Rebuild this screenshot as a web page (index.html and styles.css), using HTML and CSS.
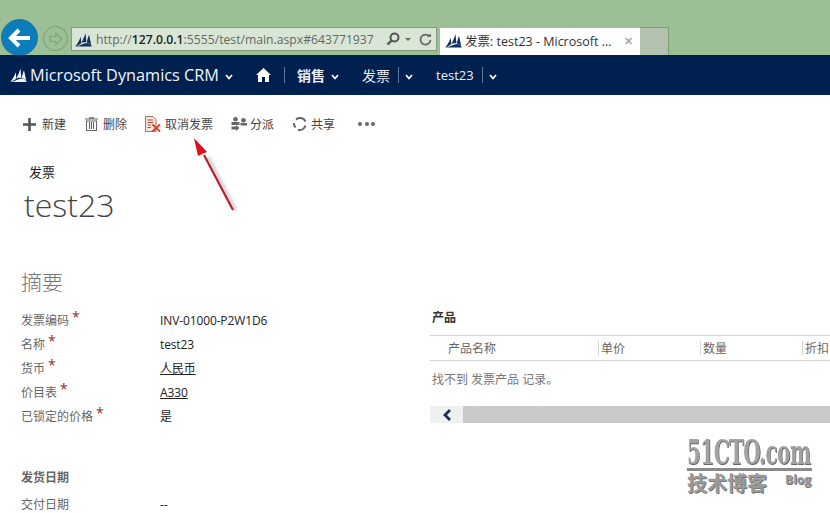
FILE: index.html
```html
<!DOCTYPE html>
<html lang="zh-CN">
<head>
  <meta charset="UTF-8">
  <meta name="viewport" content="width=device-width, initial-scale=1.0">
  <title>发票: test23 - Microsoft Dynamics CRM</title>
  <link rel="stylesheet" href="styles.css">
</head>
<body>

  <svg class="defs" width="0" height="0">
    <symbol id="sails" viewBox="0 0 24 20">
      <path d="M0 20 C3 17 6 12 8 6 L9 15 C7 17 4 19 0 20Z"/>
      <path d="M9 15 C11 11 13 6 15 1 L16 14 C14 14 11 14 9 15Z"/>
      <path d="M16.500 14 L19 5 L20 4 L23 18 C21 16 19 15 16.500 14Z"/>
      <path d="M1 20 C7 19 12 15 17 15 C20 15 22 17 24 20Z"/>
    </symbol>
    <symbol id="chev" viewBox="0 0 8 6">
      <path d="M1 1 L4 4.500 L7 1" fill="none" stroke="currentColor" stroke-width="1.700"/>
    </symbol>
  </svg>

  <!-- 浏览器 -->
  <div class="chrome">
    <div class="btn-back">
      <svg width="24" height="20" viewBox="0 0 24 20"><path d="M11 2 L3 10 L11 18 M3 10 H22" fill="none" stroke="#fff" stroke-width="4"/></svg>
    </div>
    <div class="btn-forward">
      <svg width="16" height="14" viewBox="0 0 16 14"><path d="M8 1.500 L14 7 L8 12.500 V9.500 H2 V4.500 H8Z" fill="none" stroke="#7da57a" stroke-width="1.200"/></svg>
    </div>
    <div class="address">
      <svg class="fav"><use href="#sails"/></svg>
      <span class="url">http://<b>127.0.0.1</b>:5555/test/main.aspx#643771937</span>
      <svg class="addr-icon addr-search" width="14" height="14" viewBox="0 0 14 14"><circle cx="8.500" cy="5.500" r="4" fill="none" stroke="#555" stroke-width="2"/><path d="M5.500 8.500 L1.500 12.500" stroke="#555" stroke-width="2.400"/></svg>
      <span class="caret"></span>
      <svg class="addr-icon" width="13" height="13" viewBox="0 0 13 13"><path d="M10.500 3.500 A5 5 0 1 0 11.500 7" fill="none" stroke="#666" stroke-width="1.700"/><path d="M8 3.800 H12 V0.500Z" fill="#666"/></svg>
    </div>
    <div class="tab">
      <svg class="fav"><use href="#sails"/></svg>
      <span class="tab-title">发票: test23 - Microsoft ...</span>
      <span class="tab-close">✕</span>
    </div>
    <div class="tab-new"></div>
  </div>

  <!-- 导航 -->
  <nav class="nav">
    <svg class="nav-logo"><use href="#sails"/></svg>
    <span class="brand">Microsoft Dynamics CRM</span>
    <svg class="chev chev-brand"><use href="#chev"/></svg>
    <svg class="home" width="15" height="14" viewBox="0 0 15 14"><path d="M7.500 0 L15 7 H13 V14 H9 V9 H6 V14 H2 V7 H0Z" fill="#fff"/></svg>
    <span class="nav-sep sep-home"></span>
    <b class="nav-item">销售</b>
    <svg class="chev chev-sales"><use href="#chev"/></svg>
    <span class="nav-item item-invoice">发票</span>
    <span class="nav-sep sep-invoice"></span>
    <svg class="chev chev-invoice"><use href="#chev"/></svg>
    <span class="nav-item item-record">test23</span>
    <span class="nav-sep sep-record"></span>
    <svg class="chev chev-record"><use href="#chev"/></svg>
  </nav>

  <!-- 工具栏 -->
  <div class="toolbar">
    <div class="tool tool-new">
      <svg width="13" height="13" viewBox="0 0 13 13"><path d="M6.500 0 V13 M0 6.500 H13" stroke="#555" stroke-width="2.600"/></svg>
      <span>新建</span>
    </div>
    <div class="tool tool-del">
      <svg width="13" height="14" viewBox="0 0 13 14"><path d="M0 2 H13 M1.500 4 H11.500 V13.500 H1.500Z M4.500 5 V12 M6.500 5 V12 M8.500 5 V12 M4.500 2 V0.700 H8.500 V2" fill="none" stroke="#666" stroke-width="1.100"/></svg>
      <span>删除</span>
    </div>
    <div class="tool tool-cancel">
      <svg width="16" height="16" viewBox="0 0 16 16">
        <path d="M0.500 0.500 H8 L11 3.500 V15.500 H0.500Z" fill="#f6e4df" stroke="#b5705f"/>
        <path d="M2.500 4 H8 M2.500 6.500 H8 M2.500 9 H6 M2.500 11.500 H6" stroke="#a8574a"/>
        <path d="M7.500 8.500 L15 15.500 M15 8.500 L7.500 15.500" stroke="#d9472b" stroke-width="2"/>
      </svg>
      <span>取消发票</span>
    </div>
    <div class="tool tool-assign">
      <svg width="16" height="15" viewBox="0 0 16 15" fill="#666">
        <circle cx="4.500" cy="2.300" r="2.300"/><path d="M0.500 5 H8.500 V8 H0.500Z"/>
        <path d="M0.500 9.500 H5 V8 L8.500 11 L5 14 V12.500 H0.500Z"/>
        <circle cx="12.500" cy="3.300" r="2.300"/><path d="M9.500 6 H16 V8.500 H9.500Z"/>
      </svg>
      <span>分派</span>
    </div>
    <div class="tool tool-share">
      <svg width="14" height="14" viewBox="0 0 14 14"><path d="M3 2.500 A6 6 0 0 1 12.500 4.500 M12.500 8.500 A6 6 0 0 1 5 12.800 M2.500 10.500 A6 6 0 0 1 1 6" fill="none" stroke="#666" stroke-width="2"/></svg>
      <span>共享</span>
    </div>
    <div class="tool-more"><i></i><i></i><i></i></div>
  </div>

  <!-- 标题 -->
  <div class="entity">发票</div>
  <h1 class="record-name">test23</h1>

  <main class="form">
    <section class="col-left">
      <h2 class="section-title">摘要</h2>
      <div class="field"><label>发票编码<em>*</em></label><span>INV-01000-P2W1D6</span></div>
      <div class="field"><label>名称<em>*</em></label><span>test23</span></div>
      <div class="field"><label>货币<em>*</em></label><a href="#">人民币</a></div>
      <div class="field"><label>价目表<em>*</em></label><a href="#">A330</a></div>
      <div class="field"><label>已锁定的价格<em>*</em></label><span>是</span></div>
      <h3 class="group-title">发货日期</h3>
      <div class="field"><label>交付日期</label><span>--</span></div>
    </section>

    <section class="col-right">
      <h3 class="grid-title">产品</h3>
      <div class="grid-head">
        <div class="cell cell-name">产品名称</div>
        <div class="cell">单价</div>
        <div class="cell">数量</div>
        <div class="cell">折扣</div>
      </div>
      <p class="grid-empty">找不到 发票产品 记录。</p>
      <div class="hscroll">
        <div class="hscroll-btn">
          <svg width="10" height="12" viewBox="0 0 10 12"><path d="M8 1 L3 6 L8 11" fill="none" stroke="#1f2d52" stroke-width="2.800"/></svg>
        </div>
      </div>
    </section>
  </main>

  <!-- 标注 -->
  <svg class="arrow" width="50" height="82" viewBox="0 0 50 82">
    <path class="arrow-shadow" d="M45 76 L17 22" stroke="#999" stroke-width="3"/>
    <path d="M42 75 L13 20" stroke="#b9202a" stroke-width="2.200"/>
    <path d="M3 3 L7 21 L12 18.500 L16 17Z" fill="#e00d1a"/>
  </svg>

  <div class="watermark">
    <div class="wm-site"><span>51CTO.com</span></div>
    <div class="wm-sub"><span>技术博客</span><small>Blog</small></div>
  </div>

</body>
</html>
```

FILE: styles.css
```css
* {
  margin: 0;
  padding: 0;
  box-sizing: border-box;
}

html, body {
  height: 100%;
  overflow: hidden;
}

body {
  position: relative;
  background: #fff;
  color: #222;
  font-family: "Open Sans", "Noto Sans CJK SC", sans-serif;
  font-size: 12px;
}

.defs {
  position: absolute;
}

/* 浏览器 */
.chrome {
  display: flex;
  align-items: flex-end;
  height: 55px;
  padding-left: 1px;
  background: #9cbf95;
  overflow: hidden;
}

.btn-back {
  display: flex;
  align-items: center;
  justify-content: center;
  flex: none;
  width: 37px;
  height: 37px;
  margin-bottom: -1px;
  border-radius: 50%;
  background: #0a7dbd;
  border: 1px solid #2f6f9c;
}

.btn-forward {
  display: flex;
  align-items: center;
  justify-content: center;
  flex: none;
  width: 25px;
  height: 25px;
  margin: 0 3px 4px 5px;
  border: 1px solid #74a070;
  border-radius: 50%;
}

.address {
  display: flex;
  align-items: center;
  flex: none;
  width: 366px;
  height: 24px;
  margin-bottom: 4px;
  padding: 0 5px 0 3px;
  background: #d9e6d5;
  border: 1px solid #7f9a7c;
  color: #666;
  font-size: 12.200px;
}

.url {
  white-space: nowrap;
}

.url b {
  color: #222;
  font-weight: 600;
}

.fav {
  flex: none;
  width: 17px;
  height: 15px;
  fill: #14305f;
}

.address .fav {
  margin-right: 4px;
}

.addr-icon {
  flex: none;
}

.addr-search {
  margin-left: 12px;
}

.caret {
  width: 0;
  height: 0;
  margin: 0 8px 0 5px;
  border-left: 3px solid transparent;
  border-right: 3px solid transparent;
  border-top: 3px solid #666;
}

.tab {
  display: flex;
  align-items: center;
  flex: none;
  width: 200px;
  height: 27px;
  margin-left: 3px;
  padding: 0 7px 3px 5px;
  background: #fff;
  color: #333;
  font-size: 12.500px;
}

.tab-title {
  flex: 1;
  margin-left: 3px;
  white-space: nowrap;
}

.tab-close {
  color: #aaa;
  font-size: 11px;
  font-weight: bold;
}

.tab-new {
  flex: none;
  width: 29px;
  height: 28px;
  background: #b2c2ae;
  border: 1px solid #7f9a7c;
  border-left: 0;
  border-bottom: 0;
}

/* 导航 */
.nav {
  display: flex;
  align-items: center;
  height: 40px;
  padding-left: 10px;
  background: #002050;
  color: #e8eef6;
}

.nav-logo {
  flex: none;
  width: 17px;
  height: 14px;
  margin-right: 3px;
  fill: #f2f2f2;
}

.brand {
  width: 188px;
  color: #f2f5f9;
  font-size: 16.300px;
  white-space: nowrap;
}

.chev {
  flex: none;
  width: 8px;
  height: 6px;
  margin-top: 3px;
  color: #fff;
}

.chev-brand { margin-left: 7px; }
.home { flex: none; margin-left: 23px; }
.nav-sep {
  flex: none;
  width: 1px;
  height: 16px;
  background: #5f7796;
}
.sep-home { margin: 0 12px 0 13px; }
.nav-item {
  font-size: 14px;
  white-space: nowrap;
}
.chev-sales { margin-left: 6px; }
.item-invoice { margin-left: 23px; }
.sep-invoice { margin: 0 6px 0 8px; }
.item-record { margin-left: 23px; font-size: 13px; }
.sep-record { margin: 0 6px 0 8px; }

/* 工具栏 */
.toolbar {
  display: flex;
  align-items: center;
  height: 58px;
  padding-left: 23px;
  color: #444;
}

.tool {
  display: flex;
  align-items: center;
  flex: none;
}

.tool-new { gap: 6px; margin-right: 19px; }
.tool-del { gap: 5px; margin-right: 18px; }
.tool-cancel { gap: 4px; margin-right: 18px; }
.tool-assign { gap: 3px; margin-right: 19px; }
.tool-share { gap: 4px; margin-right: 23px; }

.tool-more {
  display: flex;
  gap: 2.500px;
}

.tool-more i {
  width: 4px;
  height: 4px;
  border-radius: 50%;
  background: #666;
}

/* 标题 */
.entity {
  margin: 10px 0 0 29px;
  color: #222;
  font-size: 13px;
  line-height: 18px;
}

.record-name {
  margin: 1px 0 0 24px;
  color: #444;
  font-size: 32px;
  font-weight: 300;
  line-height: 46px;
}

.form {
  display: grid;
  grid-template-columns: 430px 400px;
  margin-top: 38px;
}

.col-left {
  padding-left: 21px;
}

.section-title {
  margin-bottom: 10px;
  color: #777;
  font-size: 21px;
  font-weight: 300;
  line-height: 32px;
}

.field {
  display: flex;
  align-items: center;
  height: 24px;
}

.field label {
  flex: none;
  width: 139px;
  color: #666;
}

.field em {
  position: relative;
  top: -3px;
  margin-left: 3px;
  color: #a01c1c;
  font-style: normal;
  font-size: 14px;
  line-height: 12px;
}

.field span,
.field a {
  letter-spacing: -.12px;
}

.field a {
  color: #222;
}

.group-title {
  margin: 41px 0 6px;
  color: #666;
  font-size: 12px;
  font-weight: bold;
  line-height: 17px;
}

/* 产品 */
.col-right {
  padding-top: 43px;
}

.grid-title {
  margin-left: 2px;
  color: #333;
  font-size: 12px;
  font-weight: bold;
  line-height: 17px;
}

.grid-head {
  display: grid;
  grid-template-columns: 168px 102px 102px 28px;
  align-items: center;
  height: 26px;
  margin-top: 9px;
  border-top: 1px solid #d6d6d6;
  border-bottom: 1px solid #d6d6d6;
  color: #666;
}

.cell {
  height: 14px;
  padding-left: 2px;
  border-left: 1px solid #d6d6d6;
  line-height: 16px;
  white-space: nowrap;
}

.cell-name {
  padding-left: 18px;
  border-left: 0;
}

.grid-empty {
  margin: 10px 0 0 2px;
  color: #777;
  line-height: 17px;
}

.hscroll {
  height: 17px;
  margin-top: 18px;
  background: #c9c9c9;
}

.hscroll-btn {
  display: flex;
  align-items: center;
  justify-content: center;
  width: 33px;
  height: 17px;
  background: #eff0f2;
}

/* 标注 */
.arrow {
  position: absolute;
  left: 191px;
  top: 135px;
}

.arrow-shadow {
  opacity: .5;
  filter: blur(1.500px);
}

.watermark {
  position: absolute;
  left: 687px;
  top: 436px;
  width: 125px;
  color: #9a9a9a;
}

.wm-site {
  height: 35px;
  border-bottom: 3px solid #8a8a8a;
  color: #a2a2a2;
  font-family: "DejaVu Serif", serif;
  font-size: 34px;
  font-weight: bold;
  letter-spacing: -1px;
  line-height: 32px;
  white-space: nowrap;
  text-shadow: 1px 1px 0 #666;
}

/* 字太宽, 压窄; 从右边缩才不会超出画面 */
.wm-site span {
  display: block;
  width: 212px;
  margin-left: -87px;
  transform: scaleX(.59);
  transform-origin: right center;
}

.wm-sub {
  display: flex;
  justify-content: space-between;
  align-items: flex-start;
  font-weight: bold;
}

.wm-sub span {
  font-size: 20px;
  line-height: 26px;
  white-space: nowrap;
  text-shadow: 1px 1px 0 #777;
}

.wm-sub small {
  margin: 1px 1px 0 0;
  font-size: 12px;
  line-height: 16px;
  text-shadow: 1px 1px 0 #777;
}
```
